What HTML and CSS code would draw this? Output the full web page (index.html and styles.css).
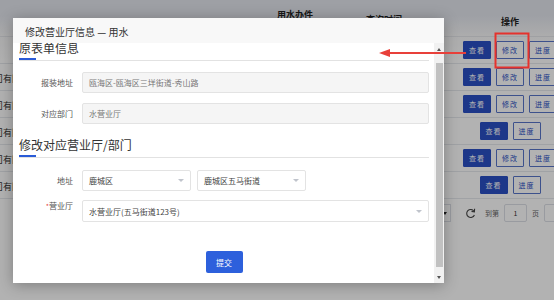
FILE: index.html
```html
<!DOCTYPE html>
<html>
<head>
  <meta charset="utf-8">
  <meta name="viewport" content="width=device-width">
  <link rel="stylesheet" href="styles.css">
  <title>修改营业厅信息</title>
</head>
<body>
  <div class="page">
    <div class="thead">
      <div class="col-name"></div>
      <div class="col-biz">用水办件<br>类型</div>
      <div class="col-time">查询时间</div>
      <div class="col-gap"></div>
      <div class="col-op">操作</div>
    </div>
    <div class="trow">
      <div class="col-name"></div>
      <div class="col-biz"></div>
      <div class="col-time"></div>
      <div class="col-gap"></div>
      <div class="col-op"><span class="tbtn fill">查看</span><span class="tbtn line">修改</span><span class="tbtn line">进度</span></div>
    </div>
    <div class="trow">
      <div class="col-name"><span class="cut">公司有限公司</span></div>
      <div class="col-biz"></div>
      <div class="col-time"></div>
      <div class="col-gap"></div>
      <div class="col-op"><span class="tbtn fill">查看</span><span class="tbtn line">修改</span><span class="tbtn line">进度</span></div>
    </div>
    <div class="trow">
      <div class="col-name"><span class="cut">公司有限公司</span></div>
      <div class="col-biz"></div>
      <div class="col-time"></div>
      <div class="col-gap"></div>
      <div class="col-op"><span class="tbtn fill">查看</span><span class="tbtn line">修改</span><span class="tbtn line">进度</span></div>
    </div>
    <div class="trow">
      <div class="col-name"><span class="cut">公司有限公司</span></div>
      <div class="col-biz"></div>
      <div class="col-time"></div>
      <div class="col-gap"></div>
      <div class="col-op"><span class="tbtn fill">查看</span><span class="tbtn line">进度</span></div>
    </div>
    <div class="trow">
      <div class="col-name"><span class="cut">公司有限公司</span></div>
      <div class="col-biz"></div>
      <div class="col-time"></div>
      <div class="col-gap"></div>
      <div class="col-op"><span class="tbtn fill">查看</span><span class="tbtn line">修改</span><span class="tbtn line">进度</span></div>
    </div>
    <div class="trow">
      <div class="col-name"><span class="cut">公司有限公司</span></div>
      <div class="col-biz"></div>
      <div class="col-time"></div>
      <div class="col-gap"></div>
      <div class="col-op"><span class="tbtn fill">查看</span><span class="tbtn line">进度</span></div>
    </div>
    <div class="pager">
      <span class="pager-size"><span class="caret-dark"></span></span>
      <svg class="refresh" width="11" height="11" viewBox="0 0 11 11">
        <path d="M9 3.2A4 4 0 1 0 9.4 7" fill="none" stroke="#444" stroke-width="1.1"/>
        <path d="M9.6 0.8 9.4 3.8 6.5 3.4" fill="none" stroke="#444" stroke-width="1.1"/>
      </svg>
      <span class="pager-text">到第</span>
      <span class="pager-box">1</span>
      <span class="pager-text">页</span>
      <span class="pager-box"></span>
    </div>
  </div>

  <div class="mask"></div>

  <div class="modal">
    <div class="modal-head">修改营业厅信息 — 用水</div>
    <div class="modal-body">
      <div class="modal-scroll">
        <div class="modal-inner">
          <div class="section-title">原表单信息</div>
          <div class="form-row">
            <label class="form-label">报装地址</label>
            <div class="field disabled">瓯海区-瓯海区三垟街道-秀山路</div>
          </div>
          <div class="form-row">
            <label class="form-label">对应部门</label>
            <div class="field disabled">水营业厅</div>
          </div>

          <div class="section-title second">修改对应营业厅/部门</div>
          <div class="form-row row-addr">
            <label class="form-label">地址</label>
            <div class="field select small">鹿城区<span class="caret"></span></div>
            <div class="field select small">鹿城区五马街道<span class="caret"></span></div>
          </div>
          <div class="form-row row-hall">
            <label class="form-label label-top"><span class="req">*</span>营业厅</label>
            <div class="field select tall">水营业厅(五马街道123号)<span class="caret"></span></div>
          </div>

          <button type="button" class="btn-submit">提交</button>
        </div>
      </div>
      <div class="scrollbar">
        <div class="sb-btn"><span class="sb-up"></span></div>
        <div class="sb-thumb"></div>
        <div class="sb-rest"></div>
        <div class="sb-btn"><span class="sb-down"></span></div>
      </div>
    </div>
  </div>

  <svg class="mark" width="554" height="300" viewBox="0 0 554 300">
    <rect x="495.5" y="33.5" width="33" height="34" fill="none" stroke="#e5322d" stroke-width="2"/>
    <line x1="466" y1="53" x2="388" y2="53" stroke="#e8403a" stroke-width="2"/>
    <polygon points="379,53 390,49 390,57" fill="#e8403a"/>
  </svg>
</body>
</html>
```

FILE: styles.css
```css
html, body {
  margin: 0;
  padding: 0;
}
body {
  width: 554px;
  height: 300px;
  overflow: hidden;
  position: relative;
  font-family: "Noto Sans CJK SC", "Noto Sans", sans-serif;
  background: #fff;
}

/* page behind the dialog */
.page {
  width: 565px;
  height: 300px;
  background: linear-gradient(#e3e6ed 0, #e3e6ed 16px, #f7f7f8 36px, #fff 60px);
}
.thead, .trow {
  display: flex;
  align-items: center;
  box-sizing: border-box;
}
.thead {
  height: 37px;
  font-size: 9px;
  font-weight: bold;
  color: #222;
  line-height: 13px;
  border-bottom: 1px solid #e4e6ea;
}
.thead .col-biz {
  padding-top: 5px;
}
.trow {
  height: 27px;
  border-bottom: 1px solid #e6e8ec;
  font-size: 9px;
  color: #333;
}
.col-name {
  width: 245px;
  overflow: hidden;
  white-space: nowrap;
  padding-top: 2px;
}
.col-biz {
  width: 100px;
  text-align: center;
}
.col-time {
  width: 78px;
  text-align: center;
  padding-top: 2px;
}
.col-gap {
  width: 32px;
}
.col-op {
  width: 110px;
  display: flex;
  justify-content: center;
  gap: 5px;
  padding-top: 6px;
}
.trow .col-op {
  padding-top: 0;
}
.cut {
  display: inline-block;
  margin-left: -15px;
}
.tbtn {
  box-sizing: border-box;
  width: 28px;
  height: 18px;
  line-height: 16px;
  text-align: center;
  font-size: 7px;
  letter-spacing: 1px;
  border: 1px solid #2a4fc4;
  border-radius: 1px;
}
.tbtn.fill {
  background: #2a4fc4;
  color: #fff;
}
.tbtn.line {
  background: #fff;
  color: #2a4fc4;
  border-color: #5874c9;
}

.pager {
  display: flex;
  align-items: center;
  margin-top: 5px;
  height: 18px;
  padding-left: 400px;
  font-size: 7px;
  color: #666;
  white-space: nowrap;
}
.pager > * {
  flex: none;
}
.pager-size {
  box-sizing: border-box;
  width: 51px;
  height: 18px;
  border: 1px solid #dcdfe6;
  display: flex;
  align-items: center;
  justify-content: flex-end;
  padding-right: 3px;
  background: #fff;
}
.caret-dark {
  width: 0;
  height: 0;
  border-left: 2px solid transparent;
  border-right: 2px solid transparent;
  border-top: 3px solid #222;
}
.refresh {
  margin-left: 14px;
}
.pager-text {
  margin-left: 9px;
}
.pager-box {
  box-sizing: border-box;
  width: 23px;
  height: 18px;
  border: 1px solid #dcdfe6;
  border-radius: 2px;
  margin-left: 5px;
  text-align: center;
  line-height: 16px;
  color: #333;
  background: #fff;
}
.pager-box + .pager-text {
  margin-left: 5px;
}

.mask {
  position: absolute;
  inset: 0;
  background: rgba(0, 0, 0, 0.3);
}

/* dialog */
.modal {
  position: absolute;
  left: 13px;
  top: 18px;
  width: 431px;
  height: 265px;
  background: #fff;
  box-shadow: 0 2px 14px rgba(0, 0, 0, 0.3);
  display: flex;
  flex-direction: column;
}
.modal-head {
  height: 25px;
  flex: none;
  background: #f8f8f8;
  padding-left: 12px;
  font-size: 10px;
  line-height: 27px;
  color: #333;
}
.modal-body {
  flex: 1;
  display: flex;
  overflow: hidden;
}
.modal-scroll {
  flex: 1;
  overflow: hidden;
  padding: 0 5px 0 6px;
}
.modal-inner {
  margin-top: -3px;
}
.section-title {
  font-size: 12px;
  line-height: 16px;
  color: #333;
  border-bottom: 1px solid #e2e2e2;
}
.section-title::after {
  content: "";
  display: block;
  width: 17px;
  height: 2px;
  margin-top: 2px;
  background: #2a5bd7;
}
.section-title.second {
  margin-top: 13px;
}
.form-row {
  display: flex;
  margin-top: 10px;
}
.section-title + .form-row {
  margin-top: 11px;
}
.section-title + .row-addr {
  margin-top: 12px;
}
.row-hall {
  margin-top: 9px;
}
.form-label {
  width: 54px;
  margin-right: 9px;
  text-align: right;
  font-size: 8px;
  line-height: 21px;
  color: #555;
  flex: none;
}
.label-top {
  line-height: 12px;
}
.req {
  color: #e54a45;
  font-size: 7px;
}
.field {
  box-sizing: border-box;
  flex: 1;
  height: 21px;
  border: 1px solid #e3e3e3;
  border-radius: 2px;
  padding: 0 6px;
  font-size: 8px;
  line-height: 19px;
  color: #666;
  background: #fff;
}
.field.disabled {
  background: #f5f5f5;
  color: #777;
}
.field.select {
  display: flex;
  align-items: center;
  justify-content: space-between;
  color: #444;
  padding-right: 6px;
}
.field.small {
  flex: none;
  width: 109px;
  margin-right: 6px;
}
.field.tall {
  height: 22px;
}
.caret {
  width: 0;
  height: 0;
  border-left: 3px solid transparent;
  border-right: 3px solid transparent;
  border-top: 3px solid #c0c4cc;
}
.btn-submit {
  display: block;
  width: 37px;
  height: 22px;
  margin: 29px auto 0;
  padding: 0;
  border: 0;
  border-radius: 2px;
  background: #2d60dc;
  color: #fff;
  font-family: inherit;
  font-size: 8px;
}

/* fake scrollbar of the dialog body */
.scrollbar {
  width: 10px;
  flex: none;
  background: #f1f1f1;
  display: flex;
  flex-direction: column;
}
.sb-btn {
  height: 12px;
  display: flex;
  align-items: center;
  justify-content: center;
}
.sb-up, .sb-down {
  width: 0;
  height: 0;
  border-left: 2.5px solid transparent;
  border-right: 2.5px solid transparent;
}
.sb-up {
  border-bottom: 3px solid #555;
}
.sb-down {
  border-top: 3px solid #555;
}
.sb-thumb {
  height: 204px;
  margin: 8px 1px 0 2px;
  background: #c1c1c1;
}
.sb-rest {
  flex: 1;
}

.mark {
  position: absolute;
  left: 0;
  top: 0;
  pointer-events: none;
}
```
